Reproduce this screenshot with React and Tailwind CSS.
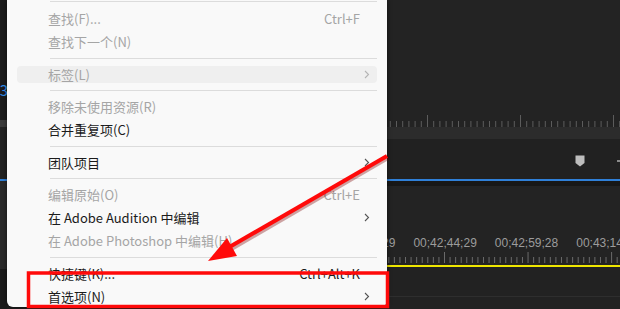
import clsx from 'clsx';

const FONT = "font-['Noto_Sans_CJK_SC','Noto_Sans',sans-serif]";

function Chevron({ disabled }) {
  return (
    <svg width="6" height="9" viewBox="0 0 6 9" className="ml-[2px]">
      <path d="M1 1 L4.5 4.5 L1 8" fill="none" stroke={disabled ? '#b4b4b4' : '#555555'} strokeWidth="1.1" />
    </svg>
  );
}

function Item({ label, shortcut, sub, disabled, active }) {
  return (
    <div className="h-[23px] pl-[10px] pr-[10px] flex items-center">
      <div
        className={clsx(
          'flex items-center h-[17px] w-full rounded-[4px] pl-[31px] pr-[7px]',
          active && 'bg-[#efefef]'
        )}
      >
        <span className={clsx('text-[13px] leading-[17px] whitespace-nowrap', disabled ? 'text-[#a5a5a5]' : 'text-[#1b1b1b]')}>
          {label}
        </span>
        {shortcut && (
          <span className={clsx('ml-auto mr-[10px] text-[13px] leading-[17px]', disabled ? 'text-[#a5a5a5]' : 'text-[#1b1b1b]')}>
            {shortcut}
          </span>
        )}
        {sub && <span className="ml-auto flex items-center"><Chevron disabled={disabled} /></span>}
      </div>
    </div>
  );
}

function Sep({ h = 10 }) {
  return (
    <div className={clsx('flex items-center pl-[43px] pr-[10px]', h === 10 ? 'h-[10px]' : 'h-[9px]')}>
      <div className="h-px w-full bg-[#dcdcdc]" />
    </div>
  );
}

function Ruler({ width, height, start, step, majorEvery, minorTop, majorTop, color }) {
  const ticks = [];
  for (let i = -20; i < 60; i++) {
    const x = start + i * step;
    if (x < 0 || x > width) continue;
    const major = ((i % majorEvery) + majorEvery) % majorEvery === 0;
    ticks.push(
      <line key={i} x1={x + 0.5} x2={x + 0.5} y1={major ? majorTop : minorTop} y2={height} stroke={color} strokeWidth="1" />
    );
  }
  return (
    <svg width={width} height={height} className="block">
      {ticks}
    </svg>
  );
}

export default function App() {
  return (
    <div className={clsx('relative w-[620px] h-[309px] overflow-hidden flex bg-[#1e1e1e]', FONT)}>
      {/* left sliver of panel behind menu */}
      <div className="w-[7px] shrink-0 flex flex-col overflow-hidden bg-[#1c1c1c]">
        <div className="h-[81px]" />
        <div className="h-[16px] flex justify-end items-center text-[15px] leading-none text-[#2f8fee] whitespace-nowrap">
          <span className="-mr-[1px]">43</span>
        </div>
        <div className="h-[23px]" />
        <div className="h-[7px] bg-[#3a3a3a]" />
        <div className="h-[52px] bg-[#232323]" />
        <div className="h-[2px] bg-[#2f80d8]" />
        <div className="h-[88px] bg-[#2a2a2a]" />
        <div className="flex-1 bg-[#1b1b1b]" />
      </div>

      {/* context menu */}
      <div className="relative z-10 w-[380px] h-[307px] shrink-0 bg-[#f9f9f9] rounded-b-[6px] shadow-[0_0_5px_rgba(0,0,0,0.55)] overflow-hidden">
        <div className="h-[7px] pt-[1px] pl-[43px] pr-[10px]">
          <div className="h-px w-full bg-[#dcdcdc]" />
        </div>
        <Item label="查找(F)..." shortcut="Ctrl+F" disabled />
        <Item label="查找下一个(N)" disabled />
        <Sep h={10} />
        <Item label="标签(L)" sub disabled active />
        <Sep h={9} />
        <Item label="移除未使用资源(R)" disabled />
        <Item label="合并重复项(C)" />
        <Sep h={10} />
        <Item label="团队项目" sub />
        <Sep h={9} />
        <Item label="编辑原始(O)" shortcut="Ctrl+E" disabled />
        <Item label="在 Adobe Audition 中编辑" sub />
        <Item label="在 Adobe Photoshop 中编辑(H)" disabled />
        <Sep h={10} />
        <Item label="快捷键(K)..." shortcut="Ctrl+Alt+K" />
        <Item label="首选项(N)" sub />
      </div>

      {/* timeline panel */}
      <div className="flex-1 min-w-0 flex flex-col overflow-hidden bg-[#232323]">
        <div className="h-[115px] bg-[#232323]" />
        <div className="h-[12px] bg-[#232323]">
          <Ruler width={233} height={12} start={40} step={6.2} majorEvery={15} minorTop={6} majorTop={0} color="#5c5c5c" />
        </div>
        <div className="h-[12px] bg-[#2c2c2c]" />
        <div className="h-[40px] bg-[#212121] flex items-start pt-[16px] pl-[188px] gap-[32px]">
          <svg width="10" height="12" viewBox="0 0 10 12" className="shrink-0">
            <path d="M0.5 0.5 H9.5 V8 L5 11.5 L0.5 8 Z" fill="#bdbdbd" />
          </svg>
          <svg width="10" height="12" viewBox="0 0 10 12" className="shrink-0">
            <rect x="4" y="0" width="2" height="12" fill="#8a8a8a" />
            <rect x="0" y="5" width="10" height="2" fill="#8a8a8a" />
          </svg>
        </div>
        <div className="h-[2px] bg-[#2f80d8]" />
        <div className="h-[5px] bg-[#171717]" />
        <div className="h-[50px] bg-[#232323]" />
        <div className="h-[14px] flex items-center -ml-[55px] gap-[18px] text-[12px] leading-none text-[#9c9c9c] whitespace-nowrap font-['Liberation_Sans',sans-serif]">
          <span>00;42;29;29</span>
          <span>00;42;44;29</span>
          <span>00;42;59;28</span>
          <span>00;43;14;28</span>
        </div>
        <div className="h-[13px]">
          <Ruler width={233} height={13} start={57} step={5.57} majorEvery={15} minorTop={7} majorTop={2} color="#6a6a6a" />
        </div>
        <div className="h-[2px]" />
        <div className="h-[2px] bg-[#eee600]" />
        <div className="h-[29px] bg-[#222222]" />
        <div className="h-px bg-[#2e2e2e]" />
        <div className="flex-1 bg-[#222222]" />
      </div>

      {/* red annotations */}
      <svg className="absolute inset-0 z-20 pointer-events-none" width="620" height="309" viewBox="0 0 620 309">
        <line x1="388" y1="158" x2="228" y2="251" stroke="#7a0000" strokeOpacity="0.35" strokeWidth="4" />
        <line x1="387" y1="156" x2="226" y2="249" stroke="#ff0a0a" strokeWidth="4" />
        <polygon points="208,261 227,238 237,256" fill="#ff0a0a" />
        <rect x="28.5" y="273" width="359" height="33.5" fill="none" stroke="#ff0a0a" strokeWidth="3.5" />
      </svg>
    </div>
  );
}
